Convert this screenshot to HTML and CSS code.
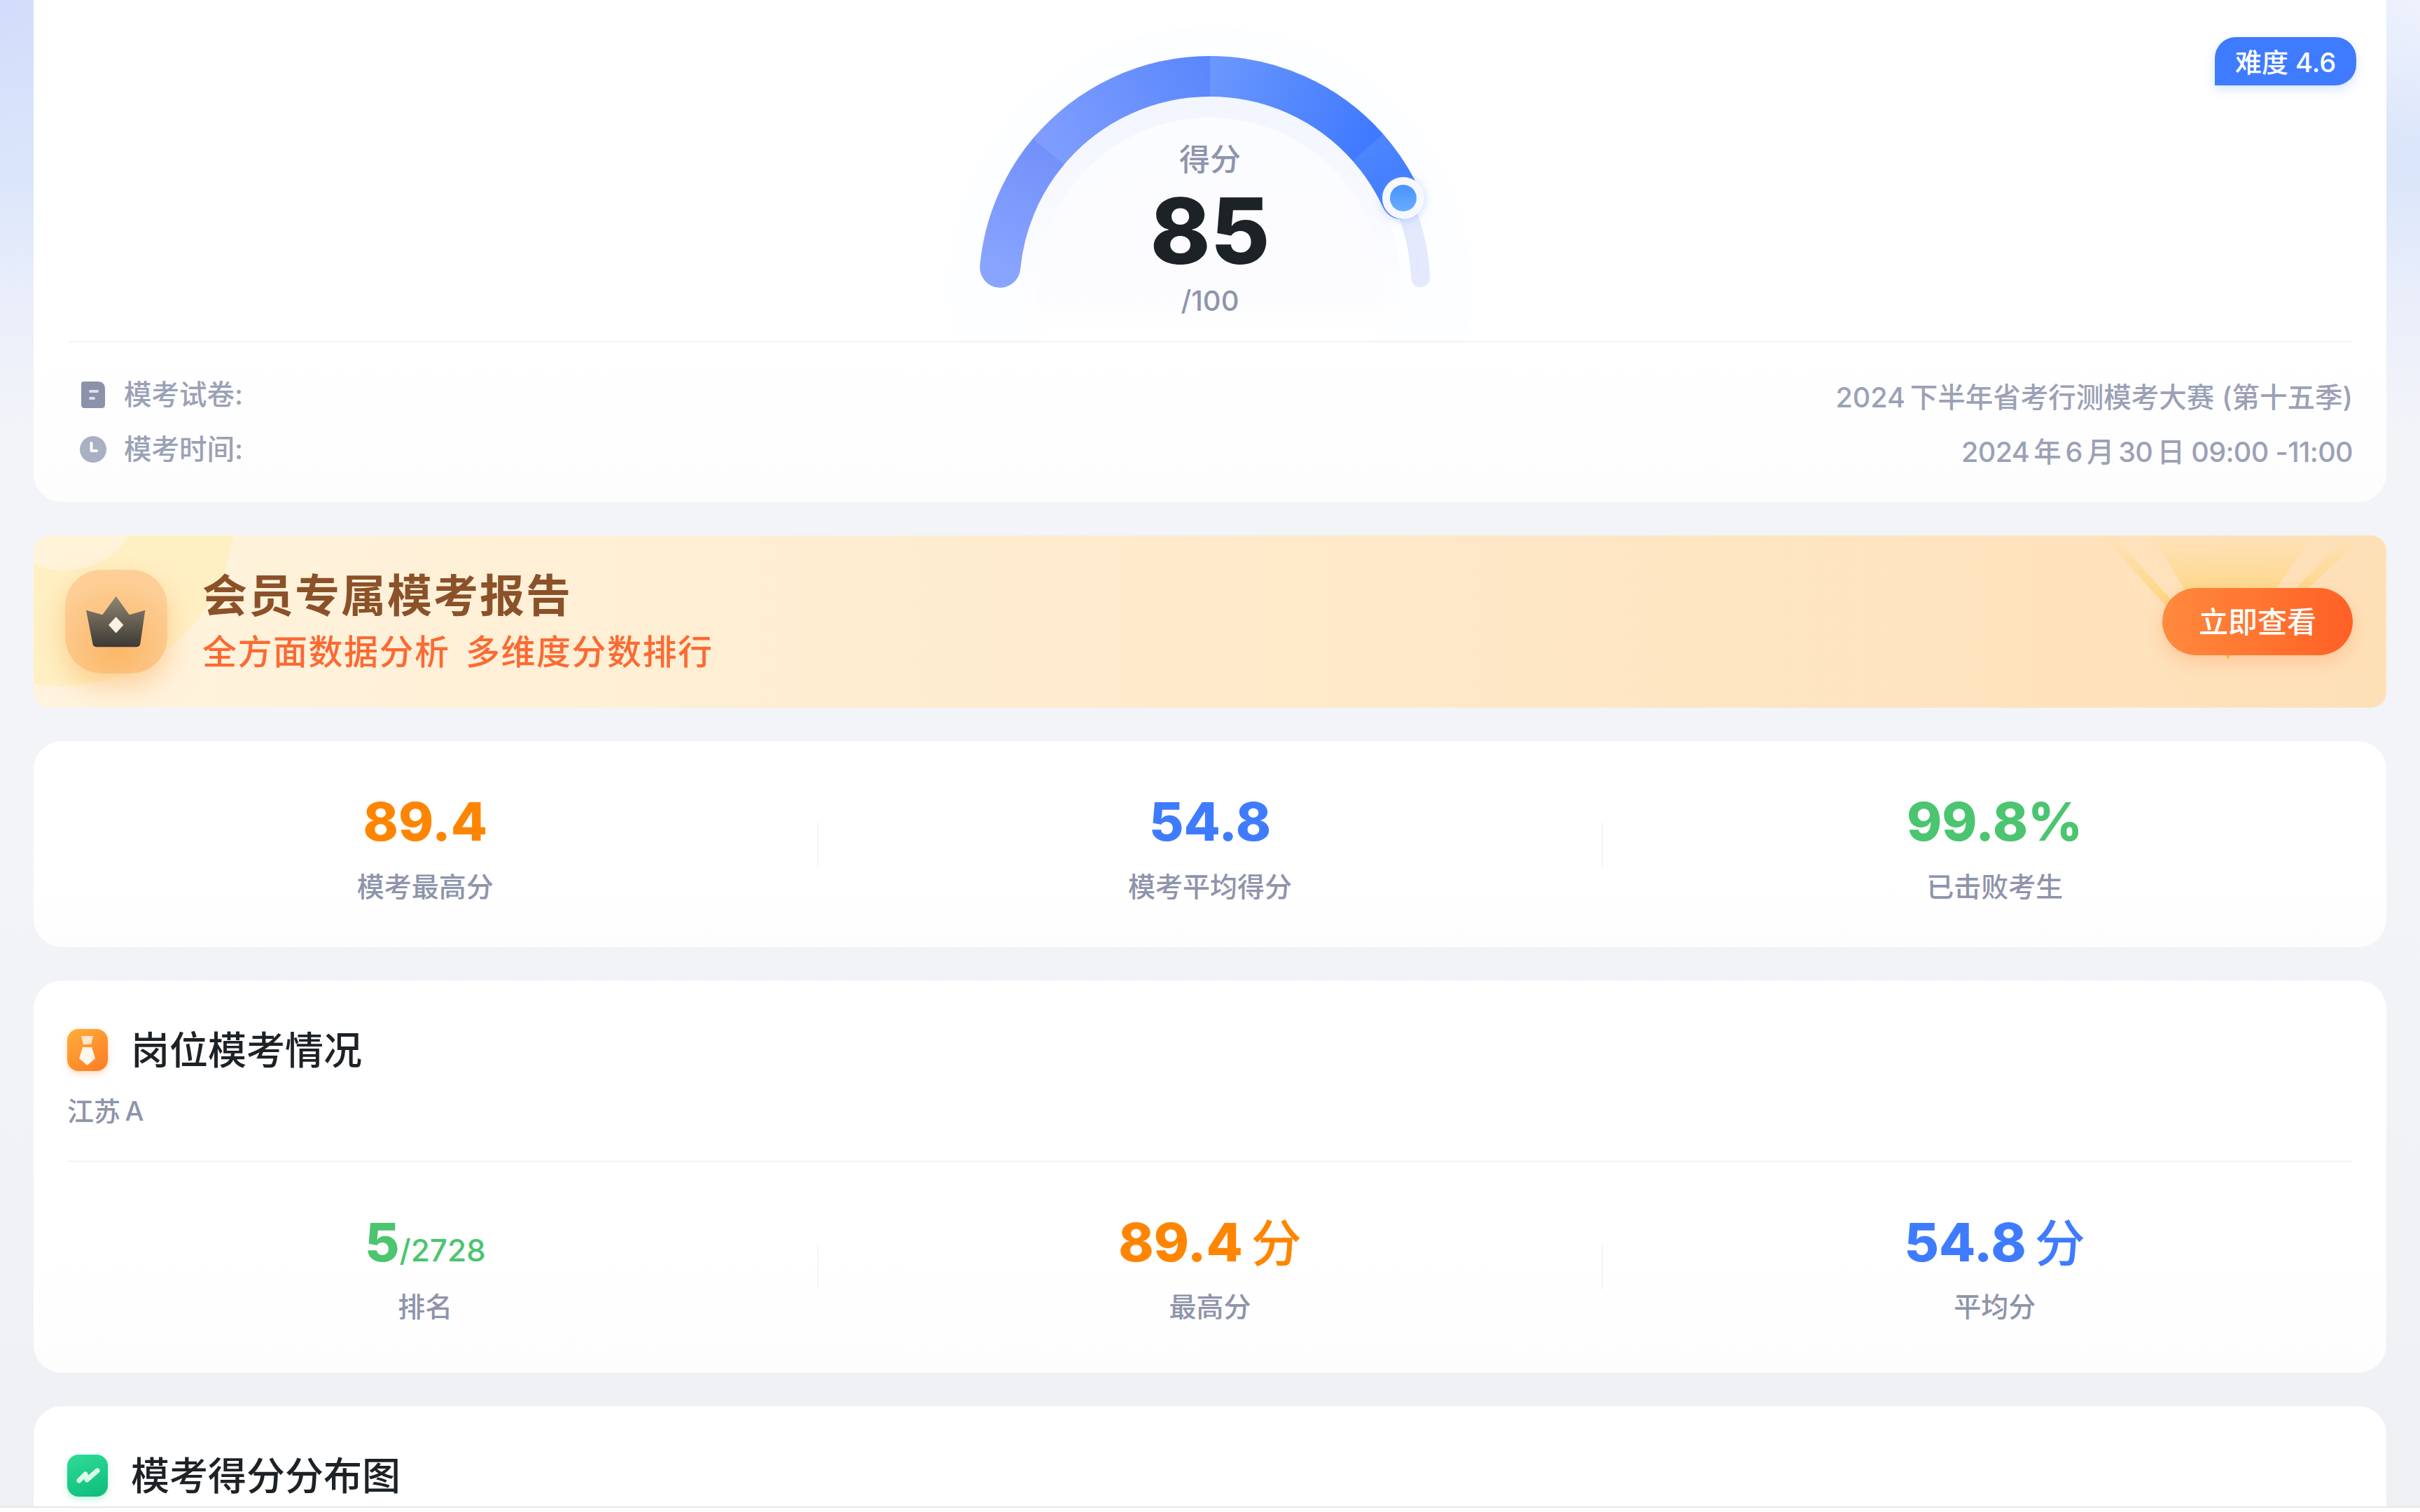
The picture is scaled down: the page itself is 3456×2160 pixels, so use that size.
FILE: index.html
```html
<!DOCTYPE html>
<html lang="zh-CN">
<head>
  <meta charset="UTF-8" />
  <title>模考报告</title>
  <link rel="stylesheet" href="styles.css">
</head>
<body>
  <div class="page">
    <!-- score card -->
    <section class="card score-card">
      <div class="badge">难度 4.6</div>
      <div class="gauge">
        <svg class="gauge-art" width="800" height="487" viewBox="0 0 800 487">
          <defs>
            <linearGradient id="band" x1="0" y1="138" x2="0" y2="450" gradientUnits="userSpaceOnUse">
              <stop offset="0" stop-color="#f2f5fe"/>
              <stop offset="1" stop-color="#fefeff"/>
            </linearGradient>
            <linearGradient id="inner" x1="0" y1="168" x2="0" y2="470" gradientUnits="userSpaceOnUse">
              <stop offset="0" stop-color="#fbfcff"/>
              <stop offset="0.85" stop-color="#fcfcff"/>
              <stop offset="1" stop-color="#ffffff"/>
            </linearGradient>
            <linearGradient id="seg1" x1="100" y1="382" x2="169" y2="216" gradientUnits="userSpaceOnUse">
              <stop offset="0" stop-color="#88a4ff"/>
              <stop offset="1" stop-color="#7391fa"/>
            </linearGradient>
            <linearGradient id="seg2" x1="169" y1="216" x2="400" y2="109" gradientUnits="userSpaceOnUse">
              <stop offset="0" stop-color="#7f9dff"/>
              <stop offset="1" stop-color="#5a88fb"/>
            </linearGradient>
            <linearGradient id="seg3" x1="400" y1="109" x2="625" y2="210" gradientUnits="userSpaceOnUse">
              <stop offset="0" stop-color="#6a97fd"/>
              <stop offset="1" stop-color="#3f79ff"/>
            </linearGradient>
            <linearGradient id="seg4" x1="625" y1="210" x2="673" y2="284" gradientUnits="userSpaceOnUse">
              <stop offset="0" stop-color="#4d86fc"/>
              <stop offset="1" stop-color="#3f7bff"/>
            </linearGradient>
            <linearGradient id="dot" x1="0" y1="0" x2="0" y2="1">
              <stop offset="0" stop-color="#4a92ff"/>
              <stop offset="1" stop-color="#68adff"/>
            </linearGradient>
            <filter id="dotGlow" x="-50%" y="-50%" width="200%" height="200%">
              <feDropShadow dx="0" dy="2" stdDeviation="7" flood-color="#6f9bff" flood-opacity="0.4"/>
            </filter>
          </defs>
          <circle cx="400" cy="410" r="372" fill="#fdfeff"/>
          <circle cx="400" cy="410" r="272" fill="url(#band)"/>
          <circle cx="400" cy="415" r="247" fill="url(#inner)"/>
          <path d="M673.4 284.2 A301 301 0 0 1 700.7 397" fill="none" stroke="#e4e9fd" stroke-width="27" stroke-linecap="round"/>
          <path d="M100.3 382 A301 301 0 0 1 169.4 216.5" fill="none" stroke="url(#seg1)" stroke-width="58" stroke-linecap="round"/>
          <path d="M169.4 216.5 A301 301 0 0 1 400 109" fill="none" stroke="url(#seg2)" stroke-width="58"/>
          <path d="M625.4 210.5 A301 301 0 0 1 673.4 284.2" fill="none" stroke="url(#seg4)" stroke-width="58" stroke-linecap="round"/>
          <path d="M400 109 A301 301 0 0 1 625.4 210.5" fill="none" stroke="url(#seg3)" stroke-width="58"/>
          <circle cx="676" cy="283" r="30" fill="#f6f8ff" filter="url(#dotGlow)"/>
          <circle cx="676" cy="283" r="19" fill="url(#dot)"/>
        </svg>
        <div class="gauge-label">得分</div>
        <div class="gauge-value">85</div>
        <div class="gauge-total">/100</div>
      </div>
      <div class="meta">
        <div class="meta-left">
          <div class="meta-row">
            <svg class="meta-icon" width="38" height="38" viewBox="0 0 38 38">
              <path d="M5 0 H25 Q36 0 36 11 V33 Q36 38 31 38 H6 Q2 38 2 33 V4 Q2 0 5 0 Z" fill="#8c92a9"/>
              <rect x="13" y="12" width="14" height="4" rx="2" fill="#dfe1e8"/>
              <rect x="13" y="22" width="9" height="4" rx="2" fill="#dfe1e8"/>
            </svg>
            <span>模考试卷:</span>
          </div>
          <div class="meta-row">
            <svg class="meta-icon" width="38" height="38" viewBox="0 0 38 38">
              <circle cx="19" cy="19" r="19" fill="#aab0c4"/>
              <path d="M16.5 10 V21 H24" fill="none" stroke="#fff" stroke-width="4" stroke-linecap="round" stroke-linejoin="round"/>
            </svg>
            <span>模考时间:</span>
          </div>
        </div>
        <div class="meta-right">
          <div>2024&thinsp;下半年省考行测模考大赛 (第十五季)</div>
          <div class="meta-date">2024&thinsp;年&thinsp;6&thinsp;月&thinsp;30&thinsp;日 09:00 -11:00</div>
        </div>
      </div>
    </section>

    <!-- member banner -->
    <section class="banner">
      <svg class="banner-rays" width="500" height="246" viewBox="0 0 500 246">
        <defs>
          <linearGradient id="ray" x1="0" y1="0" x2="0" y2="177" gradientUnits="userSpaceOnUse">
            <stop offset="0" stop-color="#ffd680" stop-opacity="0"/>
            <stop offset="0.5" stop-color="#ffd680" stop-opacity="0.9"/>
            <stop offset="1" stop-color="#ffc24a"/>
          </linearGradient>
        </defs>
        <polygon points="164,0 394,0 274,177" fill="url(#ray)"/>
        <polygon points="93,0 185,100 200,100 110,0" fill="url(#ray)"/>
        <polygon points="371,75 389,75 470,0 445,0" fill="url(#ray)"/>
      </svg>
      <div class="crown-tile">
        <svg width="146" height="148" viewBox="40 42 438 443">
          <defs>
            <linearGradient id="crown" x1="0" y1="155" x2="0" y2="372" gradientUnits="userSpaceOnUse">
              <stop offset="0" stop-color="#8f8672"/>
              <stop offset="1" stop-color="#3d3934"/>
            </linearGradient>
          </defs>
          <path d="M130 215 L200 234 L258 155 L315 234 L383 215 L362 358 Q360 372 345 372 L175 372 Q160 372 158 358 Z" fill="url(#crown)"/>
          <path d="M258 243 L290 278 L258 313 L226 278 Z" fill="#fbf0e4"/>
        </svg>
      </div>
      <div class="banner-text">
        <div class="banner-title">会员专属模考报告</div>
        <div class="banner-sub">全方面数据分析 多维度分数排行</div>
      </div>
      <button class="banner-btn">立即查看</button>
    </section>

    <!-- overall stats -->
    <section class="card">
      <div class="stats stats-top">
        <div class="stat">
          <div class="stat-value orange">89.4</div>
          <div class="stat-label">模考最高分</div>
        </div>
        <i class="vline"></i>
        <div class="stat">
          <div class="stat-value blue">54.8</div>
          <div class="stat-label">模考平均得分</div>
        </div>
        <i class="vline"></i>
        <div class="stat">
          <div class="stat-value green">99.8%</div>
          <div class="stat-label">已击败考生</div>
        </div>
      </div>
    </section>

    <!-- job stats -->
    <section class="card">
      <div class="section-head">
        <span class="head-icon icon-orange">
          <svg width="58" height="60" viewBox="0 0 58 60">
            <polygon points="20,10 37,10 34,22 23,22" fill="#ffe6cd"/>
            <polygon points="22,26 35,26 40,42 28.5,52 17,42" fill="#fff6ec"/>
          </svg>
        </span>
        <h3>岗位模考情况</h3>
      </div>
      <div class="section-sub">江苏&thinsp;A</div>
      <div class="hline"></div>
      <div class="stats stats-job">
        <div class="stat">
          <div class="stat-value green">5<small>/2728</small></div>
          <div class="stat-label">排名</div>
        </div>
        <i class="vline"></i>
        <div class="stat">
          <div class="stat-value orange">89.4<em>分</em></div>
          <div class="stat-label">最高分</div>
        </div>
        <i class="vline"></i>
        <div class="stat">
          <div class="stat-value blue">54.8<em>分</em></div>
          <div class="stat-label">平均分</div>
        </div>
      </div>
    </section>

    <!-- distribution -->
    <section class="card chart-card">
      <div class="section-head">
        <span class="head-icon icon-green">
          <svg width="58" height="60" viewBox="0 0 58 60">
            <path d="M17 37 L26 28 L28 36 L43 23" fill="none" stroke="#d9fbea" stroke-width="7" stroke-linecap="round" stroke-linejoin="round"/>
          </svg>
        </span>
        <h3>模考得分分布图</h3>
      </div>
    </section>
  </div>
  <div class="bottom-bar"></div>
</body>
</html>
```

FILE: styles.css
```css
html, body {
  margin: 0;
  padding: 0;
  height: 2160px;
  overflow: hidden;
}
body {
  font-family: Inter, "Noto Sans CJK SC", sans-serif;
  background:
    radial-gradient(circle at 0 0, #d2dcfb, rgba(210,220,251,0) 280px),
    radial-gradient(circle at 100% 0, #eef2fc, rgba(238,242,252,0) 200px),
    linear-gradient(180deg, #dee7fb 0, #dbe6fa 260px, #e9eefa 420px, #f2f4f8 620px, #f2f4f8 1200px, #eef0f4 2160px);
}
.page {
  display: flex;
  flex-direction: column;
  gap: 48px;
  padding: 0 48px;
}
.card {
  background: linear-gradient(180deg, #fff 70%, #fdfdfe);
  border-radius: 40px;
}

/* score card */
.score-card {
  position: relative;
  border-radius: 0 0 40px 40px;
  padding: 0 48px;
}
.badge {
  position: absolute;
  top: 53px;
  right: 43px;
  width: 202px;
  height: 69px;
  line-height: 72px;
  text-align: center;
  font-size: 38px;
  font-weight: 500;
  color: #fff;
  background: #3f7bff;
  border-radius: 30px 30px 30px 0;
  box-shadow: 0 6px 16px rgba(63,123,255,0.2);
}
.gauge {
  position: relative;
  width: 800px;
  height: 487px;
  margin: 0 auto;
  display: flex;
  flex-direction: column;
  align-items: center;
  padding-top: 198px;
  box-sizing: border-box;
}
.gauge-art {
  position: absolute;
  top: 0;
  left: 0;
}
.gauge-label,
.gauge-value,
.gauge-total {
  position: relative;
}
.gauge-label {
  font-size: 44px;
  line-height: 60px;
  font-weight: 500;
  color: #8e94ab;
}
.gauge-value {
  font-size: 130px;
  line-height: 130px;
  font-weight: 800;
  color: #1d2227;
  margin-top: 7px;
}
.gauge-total {
  font-size: 40px;
  line-height: 50px;
  font-weight: 500;
  color: #8e95ad;
  margin-top: 10px;
}
.meta {
  display: flex;
  justify-content: space-between;
  border-top: 2px solid #f2f3f5;
  padding: 51px 0 47px;
  font-size: 39.5px;
  font-weight: 500;
  line-height: 48px;
  color: #9ba1b6;
}
.meta-left,
.meta-right {
  display: flex;
  flex-direction: column;
  gap: 30px;
}
.meta-left {
  padding-bottom: 4px;
}
.meta-right {
  text-align: right;
  padding-top: 4px;
}
.meta-date {
  letter-spacing: -0.6px;
}
.meta-row {
  display: flex;
  align-items: center;
  gap: 25px;
  padding-left: 18px;
}

/* banner */
.banner {
  position: relative;
  overflow: hidden;
  height: 246px;
  display: flex;
  align-items: center;
  padding: 0 48px 0 45px;
  border-radius: 22px;
  background: linear-gradient(90deg, #fff4df, #fee0b7);
}
.banner::before,
.banner::after {
  content: "";
  position: absolute;
  border-radius: 50%;
}
.banner::before {
  left: -212px;
  top: -285px;
  width: 500px;
  height: 500px;
  background: #fff0c4;
}
.banner::after {
  left: -60px;
  top: -150px;
  width: 210px;
  height: 200px;
  background: #fff3da;
}
.banner-rays {
  position: absolute;
  top: 0;
  right: 0;
}
.crown-tile {
  position: relative;
  z-index: 1;
  width: 146px;
  height: 148px;
  border-radius: 52px;
  background: radial-gradient(circle at 50% 75%, #fbb666, #fdcf97 75%);
  box-shadow: 0 16px 40px rgba(250,175,95,0.55);
}
.banner-text {
  position: relative;
  z-index: 1;
  margin-left: 50px;
  padding-bottom: 4px;
  flex: 1;
}
.banner-title {
  font-size: 64px;
  line-height: 80px;
  font-weight: 600;
  letter-spacing: 2px;
  color: #8b5129;
}
.banner-sub {
  font-size: 49px;
  line-height: 60px;
  font-weight: 500;
  letter-spacing: 1.5px;
  word-spacing: 8px;
  margin-top: 11px;
  color: #fb6a33;
}
.banner-btn {
  position: relative;
  z-index: 1;
  width: 272px;
  height: 96px;
  padding: 0 0 6px;
  border: none;
  border-radius: 48px;
  font-family: inherit;
  font-size: 42px;
  font-weight: 500;
  color: #fff;
  background: linear-gradient(90deg, #ff8a3d, #ff6025);
  box-shadow: 0 10px 24px rgba(255,110,50,0.22);
}

/* stat rows */
.stats {
  display: grid;
  grid-template-columns: 1fr 2px 1fr 2px 1fr;
  padding-top: 69px;
}
.stats-top {
  padding-bottom: 58px;
}
.stats-job {
  padding-bottom: 66px;
}
.vline {
  align-self: start;
  height: 63px;
  margin-top: 47px;
  background: #f3f4f6;
}
.stats-job .vline {
  margin-top: 50px;
}
.stat {
  text-align: center;
}
.stat-value {
  font-size: 76px;
  line-height: 90px;
  font-weight: 800;
  white-space: nowrap;
}
.stat-value small {
  font-size: 44px;
  line-height: 1;
  font-weight: 500;
}
.stat-value em {
  font-style: normal;
  font-size: 72px;
  line-height: 1;
  font-weight: 500;
  margin-left: 12px;
}
.stat-label {
  font-size: 39px;
  line-height: 56px;
  font-weight: 500;
  color: #8e94ab;
  margin-top: 21px;
}
.stats-job .stat-label {
  margin-top: 20px;
}
.orange { color: #ff8500; }
.blue { color: #3f7bff; }
.green { color: #4bc56f; }

/* section head */
.section-head {
  display: flex;
  align-items: center;
  gap: 33px;
  padding: 69px 48px 0;
}
.section-head h3 {
  margin: 0;
  font-size: 55px;
  line-height: 60px;
  font-weight: 500;
  color: #1d2227;
}
.head-icon {
  display: block;
  width: 58px;
  height: 60px;
  border-radius: 16px;
}
.head-icon svg {
  display: block;
}
.icon-orange {
  background: linear-gradient(145deg, #ffae3a, #ff7a25);
  box-shadow: 0 4px 10px rgba(255,140,50,0.3);
}
.icon-green {
  background: linear-gradient(160deg, #2fdc96, #0dbb7c);
  box-shadow: 0 4px 10px rgba(20,200,130,0.25);
}
.section-sub {
  margin: 33px 48px 0;
  font-size: 38px;
  font-weight: 500;
  line-height: 48px;
  color: #8e94ab;
}
.hline {
  height: 2px;
  margin: 47px 48px 0;
  background: #f2f3f5;
}
.chart-card {
  height: 400px;
  flex: none;
}

/* edge of the page */
.bottom-bar {
  position: fixed;
  left: 0;
  right: 0;
  bottom: 0;
  height: 6px;
  background: #fff;
  border-top: 2px solid #e6e7eb;
}
```
